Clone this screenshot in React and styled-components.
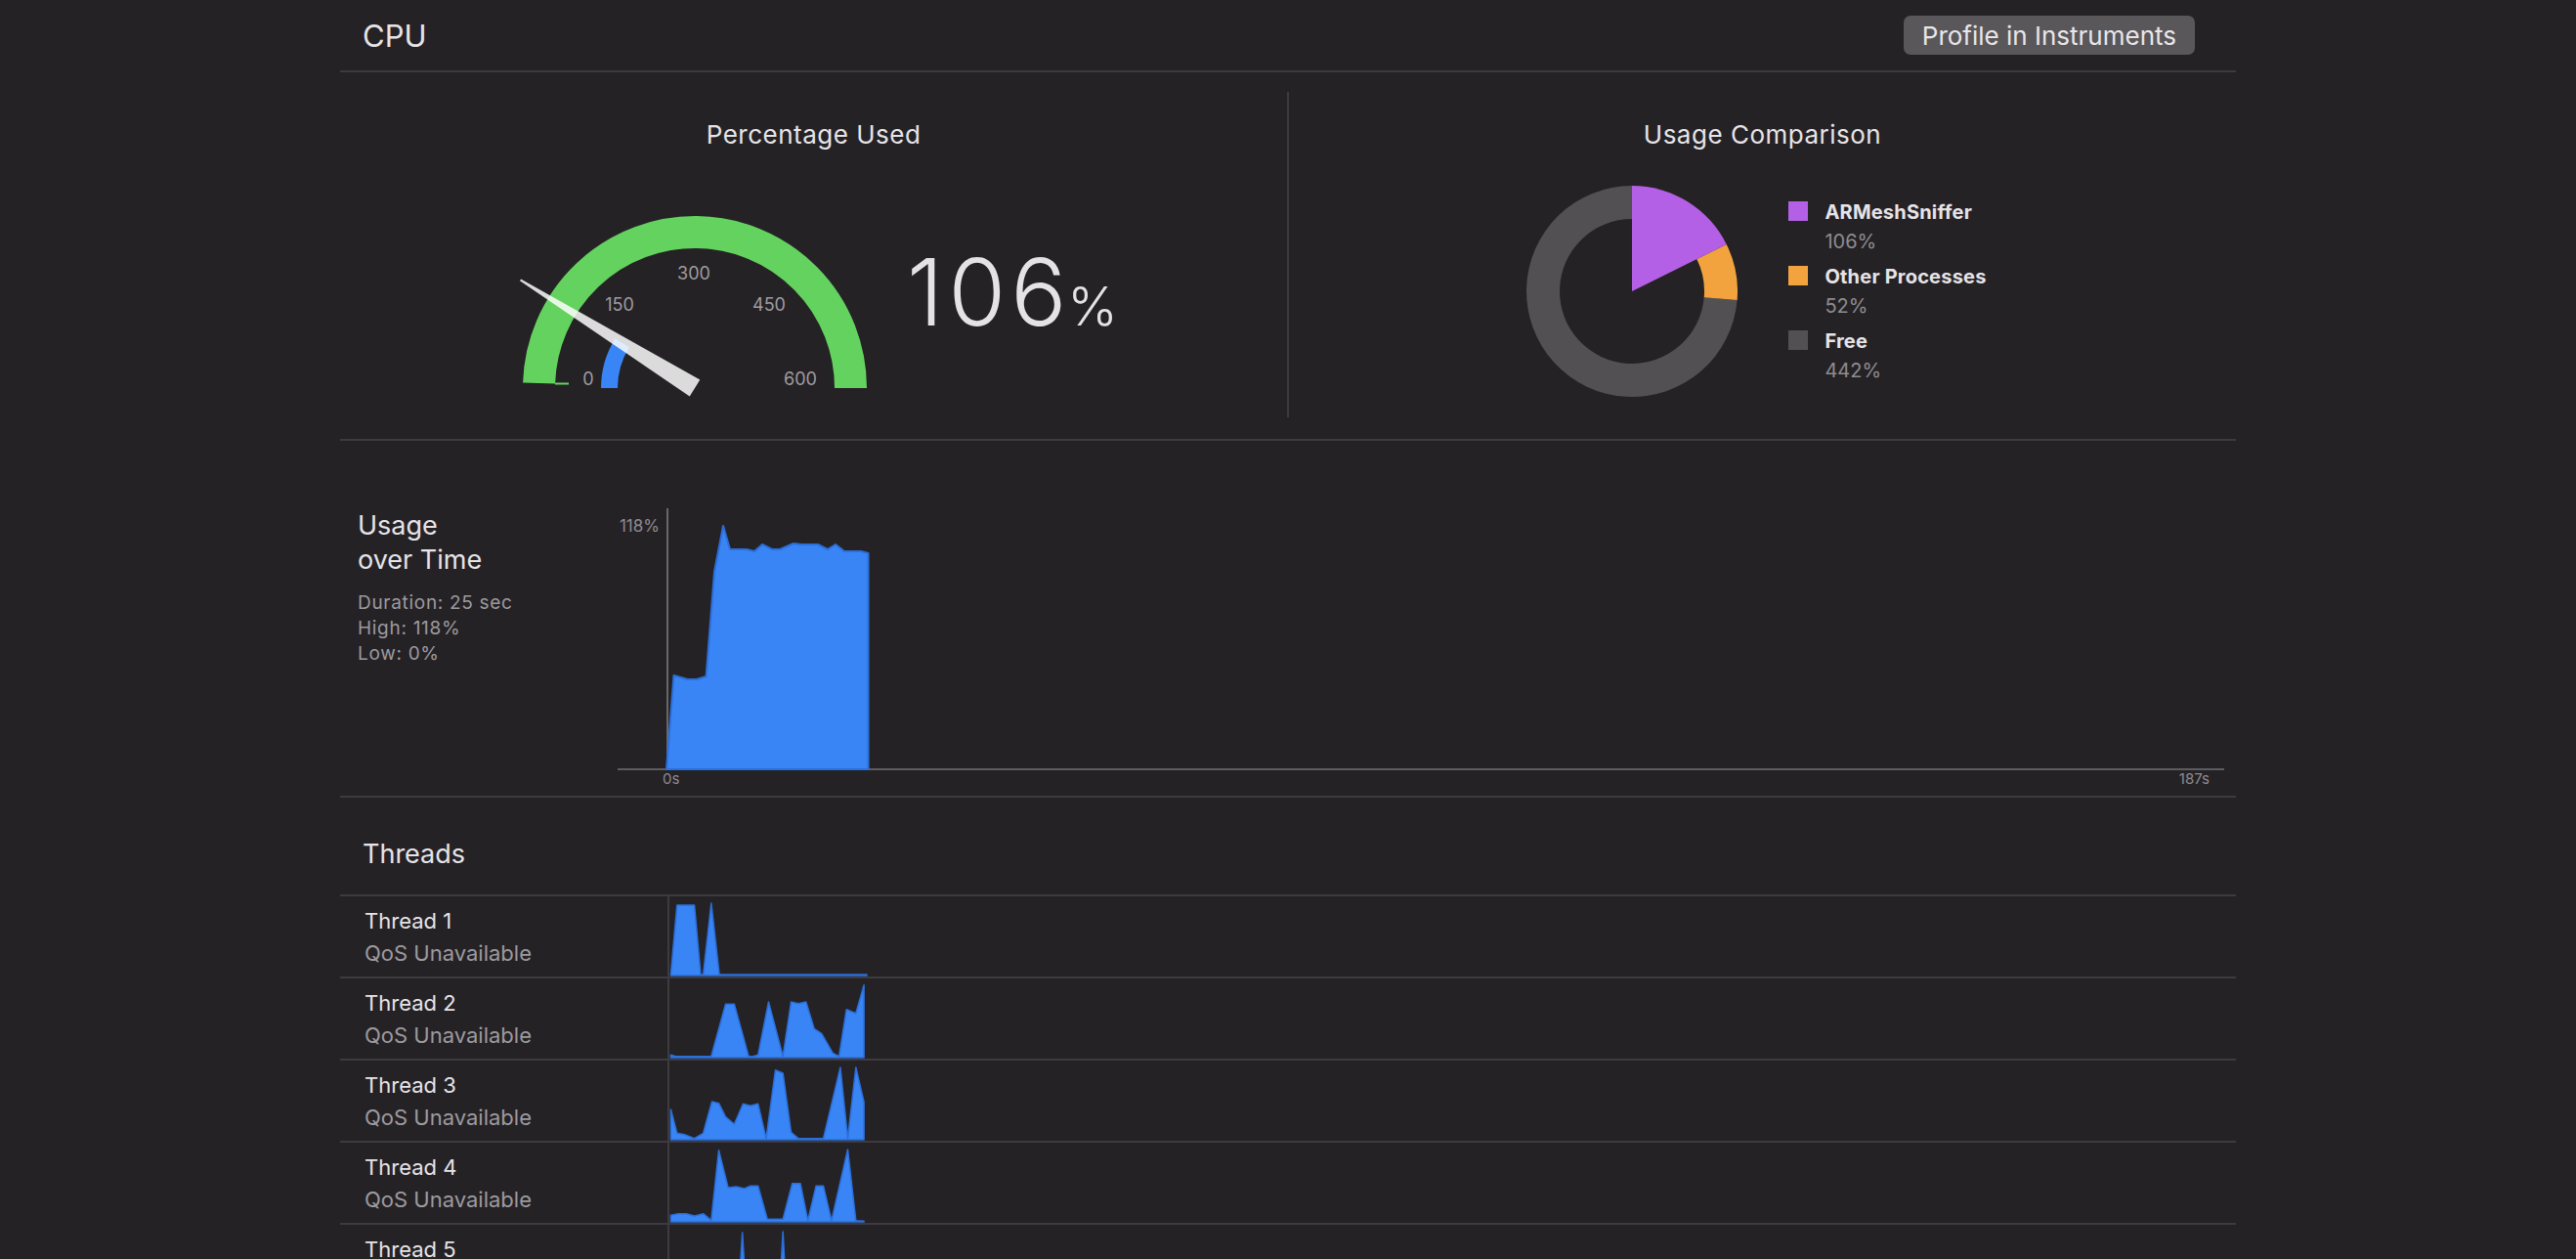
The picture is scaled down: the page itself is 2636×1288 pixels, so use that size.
import React from 'react';
import styled, { createGlobalStyle } from 'styled-components';

const BG = '#252226';
const LINE = '#3e3b3f';
const TEXT = '#e6e4e7';
const MUTED = '#9d9a9e';
const GREEN = '#64d25e';
const BLUE = '#3985f6';
const BLUE_EDGE = '#2b6fd9';
const PURPLE = '#b35fe6';
const ORANGE = '#f2a33d';
const GREY = '#525053';

const GlobalStyle = createGlobalStyle`
  html, body { margin: 0; padding: 0; background: ${BG}; }
  body {
    font-family: Inter, "Noto Sans", "Liberation Sans", sans-serif;
    color: ${TEXT};
    -webkit-font-smoothing: antialiased;
  }
`;

const Page = styled.div`
  width: 1940px;
  margin: 0 auto;
`;

const Header = styled.header`
  display: flex;
  align-items: center;
  justify-content: space-between;
  height: 72px;
  padding: 0 42px 0 23px;
  border-bottom: 2px solid ${LINE};
`;

const PageTitle = styled.h1`
  margin: 0;
  font-size: 31px;
  font-weight: 400;
  color: ${TEXT};
`;

const Button = styled.button`
  height: 40px;
  padding: 0 19px;
  border: none;
  border-radius: 7px;
  background: #5a575b;
  color: #e8e6e9;
  font-family: inherit;
  font-size: 26px;
  font-weight: 400;
`;

const TopSection = styled.section`
  display: grid;
  grid-template-columns: 1fr 2px 1fr;
  height: 375px;
  border-bottom: 2px solid ${LINE};
`;

const VDivider = styled.div`
  background: ${LINE};
  margin: 20px 0 22px;
`;

const Panel = styled.div`
  display: flex;
  flex-direction: column;
  align-items: center;
  padding-top: 48px;
`;

const PanelTitle = styled.h2`
  margin: 0;
  font-size: 26px;
  line-height: 32px;
  font-weight: 400;
  letter-spacing: 0.5px;
  color: ${TEXT};
`;

const GaugeRow = styled.div`
  display: flex;
  align-items: flex-start;
  gap: 37px;
  margin-top: 63px;
  padding-left: 10px;
`;

const BigValue = styled.div`
  margin-top: 34px;
  font-size: 95px;
  line-height: 95px;
  font-weight: 300;
  letter-spacing: 5px;
  color: #e4e2e5;
  white-space: nowrap;
`;

const Unit = styled.span`
  margin-left: -4px;
  font-size: 55px;
  font-weight: 300;
  letter-spacing: 0;
`;

const DonutRow = styled.div`
  display: flex;
  align-items: center;
  gap: 52px;
  margin-top: 36px;
  padding-right: 12px;
`;

const Legend = styled.div`
  display: flex;
  flex-direction: column;
  gap: 14px;
`;

const LegendItem = styled.div`
  display: grid;
  grid-template-columns: 20px auto;
  column-gap: 17px;
`;

const Swatch = styled.div`
  width: 20px;
  height: 20px;
  background: ${(p) => p.$color};
`;

const LegendText = styled.div`
  display: flex;
  flex-direction: column;
`;

const LegendLabel = styled.div`
  font-size: 20px;
  line-height: 22px;
  font-weight: 700;
  letter-spacing: 0.2px;
  color: ${TEXT};
`;

const LegendValue = styled.div`
  margin-top: 8px;
  font-size: 20px;
  line-height: 22px;
  color: #8f8c90;
`;

const UsageSection = styled.section`
  display: flex;
  align-items: flex-start;
  padding: 64px 0 9px 18px;
  border-bottom: 2px solid ${LINE};
`;

const UsageInfo = styled.div`
  width: 254px;
  flex: none;
  padding-top: 5px;
`;

const SectionTitle = styled.h3`
  margin: 0;
  font-size: 27px;
  line-height: 35px;
  font-weight: 400;
  color: ${TEXT};
`;

const Stats = styled.div`
  margin-top: 14px;
  font-size: 19px;
  line-height: 26px;
  color: ${MUTED};
  letter-spacing: 0.7px;
`;

const ThreadsHeader = styled.div`
  padding: 40px 0 24px 23px;
`;

const ThreadRow = styled.div`
  display: grid;
  grid-template-columns: 335px 1fr;
  height: 82px;
  border-top: 2px solid ${LINE};
`;

const ThreadInfo = styled.div`
  padding: 9px 0 0 25px;
`;

const ThreadName = styled.div`
  font-size: 22px;
  line-height: 33px;
  color: ${TEXT};
`;

const ThreadQos = styled.div`
  font-size: 22px;
  line-height: 33px;
  color: ${MUTED};
`;

const ThreadChart = styled.div`
  border-left: 2px solid ${LINE};
  display: flex;
  align-items: flex-start;
`;

/* ---------- drawings ---------- */

const rad = (d) => (d * Math.PI) / 180;

function Gauge() {
  const cx = 180;
  const cy = 180;
  const r = 159.5;
  const start = rad(1.8);
  const sx = cx - r * Math.cos(start);
  const sy = cy - r * Math.sin(start);
  const frac = 106 / 600;
  const a = rad(frac * 180);
  const br = 87.5;
  const bx = cx - br * Math.cos(a);
  const by = cy - br * Math.sin(a);
  const ux = -Math.cos(a);
  const uy = -Math.sin(a);
  const px = Math.sin(a);
  const py = -Math.cos(a);
  const L = 210;
  const tipX = cx + ux * L;
  const tipY = cy + uy * L;
  const needle = [
    [cx + px * 10, cy + py * 10],
    [tipX + px * 1, tipY + py * 1],
    [tipX - px * 1, tipY - py * 1],
    [cx - px * 10, cy - py * 10],
  ]
    .map((p) => p.join(','))
    .join(' ');
  const labels = [
    ['0', 71, 170],
    ['150', 103, 94],
    ['300', 179, 62],
    ['450', 256, 94],
    ['600', 288, 170],
  ];
  return (
    <svg width="360" height="200" viewBox="0 0 360 200">
      <path
        d={`M ${sx} ${sy} A ${r} ${r} 0 0 1 ${cx + r} ${cy}`}
        fill="none"
        stroke={GREEN}
        strokeWidth="33"
      />
      <rect x="37" y="174.5" width="14" height="2" fill={GREEN} />
      <path
        d={`M ${cx - br} ${cy} A ${br} ${br} 0 0 1 ${bx} ${by}`}
        fill="none"
        stroke={BLUE}
        strokeWidth="17"
      />
      {labels.map(([t, x, y]) => (
        <text
          key={t}
          x={x}
          y={y}
          fill="#9f9ca0"
          fontSize="18"
          fontFamily="Inter, sans-serif"
          textAnchor="middle"
          dominantBaseline="central"
        >
          {t}
        </text>
      ))}
      <polygon points={needle} fill="rgba(255,255,255,0.84)" />
    </svg>
  );
}

function pt(c, r, deg) {
  const t = rad(deg);
  return [c + r * Math.sin(t), c - r * Math.cos(t)];
}

function ring(c, ro, ri, a0, a1) {
  const large = a1 - a0 > 180 ? 1 : 0;
  const [x0, y0] = pt(c, ro, a0);
  const [x1, y1] = pt(c, ro, a1);
  const [x2, y2] = pt(c, ri, a1);
  const [x3, y3] = pt(c, ri, a0);
  return `M ${x0} ${y0} A ${ro} ${ro} 0 ${large} 1 ${x1} ${y1} L ${x2} ${y2} A ${ri} ${ri} 0 ${large} 0 ${x3} ${y3} Z`;
}

function Donut() {
  const c = 108;
  const ro = 108;
  const ri = 74;
  const total = 600;
  const a1 = (106 / total) * 360;
  const a2 = a1 + (52 / total) * 360;
  const [wx, wy] = pt(c, ro, a1);
  return (
    <svg width="216" height="216" viewBox="0 0 216 216">
      <path d={ring(c, ro, ri, a2, 360)} fill={GREY} />
      <path d={ring(c, ro, ri, a1, a2)} fill={ORANGE} />
      <path d={`M ${c} ${c} L ${c} 0 A ${ro} ${ro} 0 0 1 ${wx} ${wy} Z`} fill={PURPLE} />
    </svg>
  );
}

const usagePoints = [
  [62, 272], [69.5, 176], [83.5, 180], [93, 180], [102.6, 177], [111, 70], [120, 23],
  [127, 47], [144, 47], [152, 49], [160, 42], [170, 47], [178, 47], [192, 41],
  [200, 42], [217, 42], [227, 47], [235, 42], [244, 49], [261, 49], [268.5, 51], [268.5, 272],
];

function UsageChart() {
  const d = 'M ' + usagePoints.map((p) => p.join(' ')).join(' L ') + ' Z';
  return (
    <svg width="1668" height="290" viewBox="0 0 1668 290">
      <line x1="63" y1="5" x2="63" y2="272" stroke="#6a676b" strokeWidth="2" />
      <line x1="12" y1="272" x2="1656" y2="272" stroke="#5f5c60" strokeWidth="2" />
      <path d={d} fill={BLUE} stroke={BLUE_EDGE} strokeWidth="2" strokeLinejoin="round" />
      <text x="55" y="23" fill="#8e8b8f" fontSize="17" fontFamily="Inter, sans-serif" textAnchor="end" dominantBaseline="central">
        118%
      </text>
      <text x="58" y="281" fill="#8e8b8f" fontSize="15" fontFamily="Inter, sans-serif" dominantBaseline="central">
        0s
      </text>
      <text x="1641" y="281" fill="#8e8b8f" fontSize="15" fontFamily="Inter, sans-serif" textAnchor="end" dominantBaseline="central">
        187s
      </text>
    </svg>
  );
}

const threads = [
  [[1.4, 80], [7.8, 9], [25.6, 9], [32, 80], [34.6, 80], [42.8, 7], [51.1, 80], [202, 80]],
  [[1.4, 78.3], [6.5, 79.7], [42.8, 79.7], [57.5, 26.3], [66.4, 26.3], [81.1, 79.7], [85.6, 79.7],
    [90.7, 78.3], [101.5, 24], [116.2, 79.7], [124.5, 24], [132.1, 25.7], [139.8, 24], [148.1, 51.3],
    [155.7, 56.3], [167.2, 76.3], [173.6, 79.7], [181.2, 31.7], [190.8, 35.7], [199.1, 6.7], [199.1, 80.3]],
  [[1.4, 50], [7.8, 74.3], [15.4, 75.7], [25.6, 79.7], [34.6, 74.3], [43.5, 42], [50.5, 43.7],
    [57.5, 57.7], [66.4, 65], [75.4, 44.3], [83, 46.3], [90.7, 44.3], [99, 79.7], [108.5, 9.7],
    [116.2, 13], [124.5, 73.3], [132.1, 79.7], [157.6, 79.7], [174.9, 7], [182.5, 79.7], [190.8, 7],
    [199.1, 42.3], [199.1, 80.3]],
  [[1.4, 74.3], [9, 72.7], [17.3, 72.7], [25.6, 75], [34.6, 72.7], [42.8, 79.3], [50.5, 7.7],
    [60.1, 46], [68.4, 45], [76.6, 47], [83, 44.3], [90.7, 44.3], [100.2, 78.3], [116.2, 78.3],
    [125.7, 41.7], [134, 41.7], [141.7, 79.7], [150, 44.3], [157.6, 44.3], [165.9, 79.7], [182.5, 7],
    [190.8, 79.7], [199.1, 80.3]],
  [[1.4, 80], [70, 80], [74.7, 8], [79, 80], [112, 80], [116.2, 7], [120, 80], [150, 62],
    [158, 80], [185, 80], [192, 50], [199.1, 80]],
  [[1.4, 80], [30, 80], [38, 30], [46, 80], [120, 80], [128, 20], [136, 80], [199.1, 80]],
];

function Sparkline({ points }) {
  const first = points[0];
  const last = points[points.length - 1];
  const d =
    `M ${first[0]} 81 L ` + points.map((p) => p.join(' ')).join(' L ') + ` L ${last[0]} 81 Z`;
  return (
    <svg width="220" height="82" viewBox="0 0 220 82">
      <path d={d} fill={BLUE} stroke={BLUE_EDGE} strokeWidth="1.5" strokeLinejoin="round" />
    </svg>
  );
}

const legend = [
  { label: 'ARMeshSniffer', value: '106%', color: PURPLE },
  { label: 'Other Processes', value: '52%', color: ORANGE },
  { label: 'Free', value: '442%', color: GREY },
];

export default function App() {
  return (
    <>
      <GlobalStyle />
      <Page>
        <Header>
          <PageTitle>CPU</PageTitle>
          <Button>Profile in Instruments</Button>
        </Header>

        <TopSection>
          <Panel>
            <PanelTitle>Percentage Used</PanelTitle>
            <GaugeRow>
              <Gauge />
              <BigValue>
                106<Unit>%</Unit>
              </BigValue>
            </GaugeRow>
          </Panel>
          <VDivider />
          <Panel>
            <PanelTitle>Usage Comparison</PanelTitle>
            <DonutRow>
              <Donut />
              <Legend>
                {legend.map((l) => (
                  <LegendItem key={l.label}>
                    <Swatch $color={l.color} />
                    <LegendText>
                      <LegendLabel>{l.label}</LegendLabel>
                      <LegendValue>{l.value}</LegendValue>
                    </LegendText>
                  </LegendItem>
                ))}
              </Legend>
            </DonutRow>
          </Panel>
        </TopSection>

        <UsageSection>
          <UsageInfo>
            <SectionTitle>
              Usage
              <br />
              over Time
            </SectionTitle>
            <Stats>
              Duration: 25 sec
              <br />
              High: 118%
              <br />
              Low: 0%
            </Stats>
          </UsageInfo>
          <UsageChart />
        </UsageSection>

        <ThreadsHeader>
          <SectionTitle>Threads</SectionTitle>
        </ThreadsHeader>

        {threads.map((pts, i) => (
          <ThreadRow key={i}>
            <ThreadInfo>
              <ThreadName>Thread {i + 1}</ThreadName>
              <ThreadQos>QoS Unavailable</ThreadQos>
            </ThreadInfo>
            <ThreadChart>
              <Sparkline points={pts} />
            </ThreadChart>
          </ThreadRow>
        ))}
      </Page>
    </>
  );
}
